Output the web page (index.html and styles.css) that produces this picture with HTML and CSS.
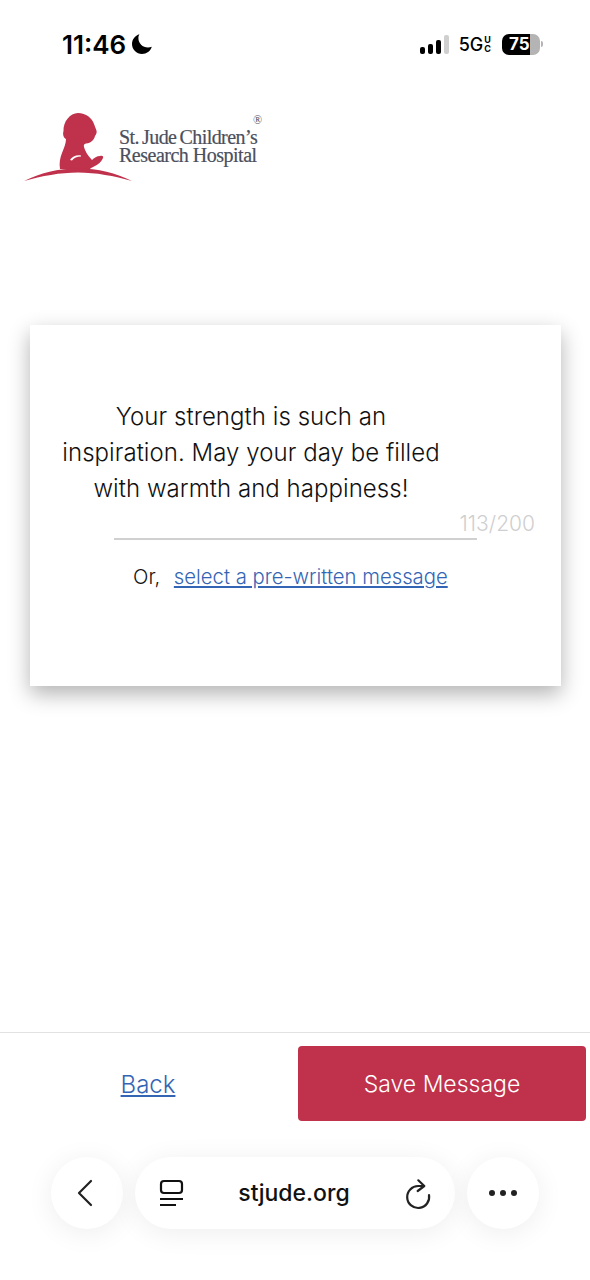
FILE: index.html
```html
<!DOCTYPE html>
<html lang="en">
<head>
    <meta charset="UTF-8">
    <meta name="viewport" content="width=device-width, initial-scale=1.0">
    <title>St. Jude Message</title>
    <link rel="stylesheet" href="styles.css">
</head>
<body>
    <div class="page">
        <!-- Phone status bar -->
        <div class="status-bar">
            <div class="status-left">
                <span class="time">11:46</span>
                <svg class="moon" width="22" height="22" viewBox="0 0 22 22"><path d="M8.500 1.200C4 2.500 1 6.500 1 11c0 5.600 4.500 10 10 10 4.600 0 8.500-3 9.800-7.200-1.200.5-2.500.7-3.800.7-5.500 0-9.600-4.200-9.600-9.500 0-1.400.3-2.700 1.100-3.800z" fill="#000"/></svg>
            </div>
            <div class="status-right">
                <div class="signal">
                    <span class="bar bar-1"></span>
                    <span class="bar bar-2"></span>
                    <span class="bar bar-3"></span>
                    <span class="bar bar-4"></span>
                </div>
                <span class="network">5G<span class="uc"><span>U</span><span>C</span></span></span>
                <div class="battery"><span class="battery-level">75</span></div>
                <span class="battery-tip"></span>
            </div>
        </div>

        <header class="logo">
            <svg class="logo-mark" width="108" height="68" viewBox="0 0 108 68">
                <path d="M54 0C62 0 68 5 70 11 71 14 72.700 17 72.700 19 72.500 21 71.500 22 71 23 70 27 67 30 62 30.500 60 31 59.500 32 60 34 61 38 63.500 42 68 47 70 45 73 43 76 43 79 42 80 44 78.500 46 77 49 74 52 70 53.500 68 54.500 67 55 66 56L36 56C35 50 36 45 38 40 40 35 42 30 42 26 39.500 25 38.500 21 39.500 18 39 9 46 0 54 0z" fill="#c0314c"/>
                <path d="M46 47C48 43.500 53 41.500 57 42.500L57 43.500C53 43.500 50 45 48 47.500z" fill="#fff"/>
                <path d="M0 68C16 60 34 55.500 54 55.500 74 55.500 92 60 108 68 90 63 72 59.500 54 59.500 36 59.500 18 63 0 68z" fill="#c0314c"/>
            </svg>
            <div class="logo-text">
                <span class="logo-reg">&reg;</span>
                <div class="logo-line-1">St. Jude Children&rsquo;s</div>
                <div class="logo-line-2">Research Hospital</div>
            </div>
        </header>

        <main class="card">
            <p class="message">Your strength is such an<br>inspiration. May your day be filled<br>with warmth and happiness!</p>
            <div class="counter">113/200</div>
            <div class="rule"></div>
            <p class="alt">Or, <a href="#" class="alt-link">select a pre-written message</a></p>
        </main>

        <footer class="actions">
            <div class="back-wrap"><a href="#" class="back">Back</a></div>
            <button class="save">Save Message</button>
        </footer>

        <!-- Safari bottom toolbar -->
        <nav class="browser-bar">
            <div class="round-btn">
                <svg width="20" height="28" viewBox="0 0 20 28"><path d="M14 2L2 14l12 12" fill="none" stroke="#222" stroke-width="2.200" stroke-linecap="round" stroke-linejoin="round"/></svg>
            </div>
            <div class="url-pill">
                <svg width="26" height="28" viewBox="0 0 26 28"><rect x="3" y="2" width="21" height="12" rx="3" fill="none" stroke="#111" stroke-width="2.200"/><path d="M2 20h23" stroke="#111" stroke-width="2"/><path d="M2 26h16" stroke="#111" stroke-width="2"/></svg>
                <span class="url">stjude.org</span>
                <svg width="30" height="34" viewBox="0 0 30 34"><path d="M20 10H14.300A11 11 0 1 0 25 19" fill="none" stroke="#222" stroke-width="2.200" stroke-linecap="round"/><path d="M14.300 4.300L20.300 10 13.700 15" fill="none" stroke="#222" stroke-width="2.200" stroke-linecap="round" stroke-linejoin="round"/></svg>
            </div>
            <div class="round-btn">
                <div class="dots"><span></span><span></span><span></span></div>
            </div>
        </nav>
    </div>
</body>
</html>
```

FILE: styles.css
```css
* {
    box-sizing: border-box;
}

body {
    margin: 0;
    padding: 0;
    font-family: Inter, Arial, sans-serif;
    background-color: #fff;
    color: #111;
}

.page {
    display: flex;
    flex-direction: column;
    height: 1280px;
    overflow: hidden;
}

/* Status bar */
.status-bar {
    display: flex;
    justify-content: space-between;
    align-items: center;
    height: 32px;
    margin-top: 28px;
    padding: 0 47px 0 62px;
}

.status-left {
    display: flex;
    align-items: center;
    gap: 5px;
}

.time {
    font-size: 26px;
    font-weight: 600;
    color: #000;
}

.status-right {
    display: flex;
    align-items: center;
}

.signal {
    display: flex;
    align-items: flex-end;
    gap: 3px;
    height: 19px;
    margin-right: 10px;
}

.bar {
    width: 5px;
    border-radius: 2px;
    background-color: #000;
}

.bar-1 { height: 7px; }
.bar-2 { height: 10px; }
.bar-3 { height: 14px; }
.bar-4 { height: 19px; background-color: #cfcfcf; }

.network {
    display: flex;
    align-items: center;
    font-size: 18px;
    font-weight: 500;
    color: #000;
    margin-right: 11px;
}

.uc {
    display: flex;
    flex-direction: column;
    font-size: 9px;
    font-weight: 700;
    line-height: 9px;
    margin-left: 1px;
}

.battery {
    width: 38px;
    height: 21px;
    border-radius: 7px;
    background: linear-gradient(to right, #000 75%, #b4b4b4 75%);
    text-align: left;
}

.battery-level {
    display: block;
    padding-left: 7px;
    font-size: 17px;
    font-weight: 700;
    line-height: 21px;
    color: #fff;
}

.battery-tip {
    width: 2px;
    height: 6px;
    margin-left: 1px;
    border-radius: 0 2px 2px 0;
    background-color: #b4b4b4;
}

/* Logo */
.logo {
    display: flex;
    margin-top: 53px;
    padding-left: 24px;
    height: 68px;
}

.logo-text {
    position: relative;
    margin-left: -13px;
    padding-top: 15px;
    font-family: "Liberation Serif", serif;
    font-size: 20px;
    line-height: 18px;
    color: #4b4f5c;
    white-space: nowrap;
    -webkit-text-stroke: 0.2px #4b4f5c;
}

.logo-line-1 {
    letter-spacing: -0.55px;
    word-spacing: -1.5px;
}

.logo-line-2 {
    letter-spacing: -0.5px;
}

.logo-reg {
    position: absolute;
    top: 1px;
    right: -5px;
    font-size: 12px;
    line-height: 12px;
    -webkit-text-stroke: 0;
}

/* Message card */
.card {
    width: 531px;
    height: 361px;
    margin: 144px 0 0 30px;
    padding-top: 74px;
    background-color: #fff;
    box-shadow: 0 8px 20px rgba(0, 0, 0, 0.3);
}

.message {
    width: 400px;
    margin: 0 0 0 21px;
    font-size: 24px;
    font-weight: 350;
    line-height: 36px;
    letter-spacing: 0.05px;
    text-align: center;
    color: #111;
}

.counter {
    margin-top: 5px;
    padding-right: 26px;
    font-size: 21px;
    font-weight: 300;
    line-height: 24px;
    text-align: right;
    color: #cfcfcf;
}

.rule {
    width: 363px;
    height: 2px;
    margin: 2px 0 0 84px;
    background-color: #d0d0d0;
}

.alt {
    margin: 25px 0 0 103px;
    font-size: 20.3px;
    font-weight: 350;
    line-height: 24px;
    color: #111;
}

.alt-link {
    margin-left: 8px;
    color: #3465b4;
}

/* Footer actions */
.actions {
    display: flex;
    align-items: center;
    height: 89px;
    margin-top: 346px;
    padding-top: 13px;
    border-top: 1px solid #e2e2e2;
}

.back-wrap {
    width: 296px;
    padding-top: 1px;
    text-align: center;
}

.back {
    font-size: 24px;
    font-weight: 300;
    color: #3465b4;
}

.save {
    width: 288px;
    height: 75px;
    margin-left: 2px;
    border: none;
    border-radius: 4px;
    background-color: #c0314c;
    color: #fff;
    font-family: Inter, Arial, sans-serif;
    font-size: 23px;
    font-weight: 300;
}

/* Browser toolbar */
.browser-bar {
    display: flex;
    align-items: center;
    gap: 12px;
    margin-top: 36px;
    padding-left: 51px;
}

.round-btn,
.url-pill {
    height: 72px;
    border-radius: 36px;
    background-color: #fff;
    box-shadow: 0 4px 28px rgba(0, 0, 0, 0.07);
}

.round-btn {
    display: flex;
    align-items: center;
    justify-content: center;
    width: 72px;
}

.url-pill {
    display: flex;
    align-items: center;
    justify-content: space-between;
    width: 320px;
    padding: 0 21px 0 23px;
}

.url {
    font-size: 23px;
    font-weight: 500;
    color: #111;
}

.dots {
    display: flex;
    gap: 5px;
}

.dots span {
    width: 6px;
    height: 6px;
    border-radius: 50%;
    background-color: #222;
}
```
